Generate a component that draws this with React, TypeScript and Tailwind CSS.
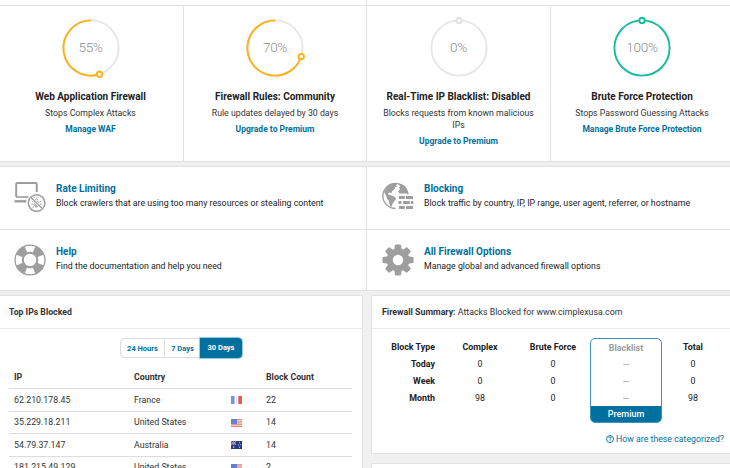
import React from "react";

type RingProps = { value: number; color: string };

function Ring({ value, color }: RingProps) {
  const r = 27.6;
  const a = (value / 100) * Math.PI * 2;
  const x = 32 - r * Math.sin(a);
  const y = 32 - r * Math.cos(a);
  const large = value > 50 ? 1 : 0;
  return (
    <div className="grid h-16 w-16 place-items-center">
      <svg className="col-start-1 row-start-1" width="64" height="64" viewBox="0 0 64 64" fill="none" strokeWidth="1.9">
        <circle cx="32" cy="32" r={r} stroke={value === 100 ? color : "#e7e7e7"} />
        {value > 0 && value < 100 && <path d={`M32 ${32 - r}A${r} ${r} 0 ${large} 0 ${x} ${y}`} stroke={color} />}
        <circle cx={x} cy={y} r="2.7" fill="#fff" stroke={color} />
      </svg>
      <span className="col-start-1 row-start-1 text-[13.5px] font-light leading-none tracking-[-0.3px] text-[#8e8e8e]">{value}%</span>
    </div>
  );
}

type Status = { value: number; color: string; title: string; text: string; link: string };

const statuses: Status[] = [
  { value: 55, color: "#fcb214", title: "Web Application Firewall", text: "Stops Complex Attacks", link: "Manage WAF" },
  { value: 70, color: "#fcb214", title: "Firewall Rules: Community", text: "Rule updates delayed by 30 days", link: "Upgrade to Premium" },
  { value: 0, color: "#e2e2e2", title: "Real-Time IP Blacklist: Disabled", text: "Blocks requests from known malicious IPs", link: "Upgrade to Premium" },
  { value: 100, color: "#16bc9b", title: "Brute Force Protection", text: "Stops Password Guessing Attacks", link: "Manage Brute Force Protection" },
];

function StatusCard({ value, color, title, text, link }: Status) {
  return (
    <div className="flex flex-col items-center border-r border-[#e2e2e2] pt-2.5 text-center first:pr-0.5">
      <Ring value={value} color={color} />
      <h3 className="mt-2.5 whitespace-nowrap text-[10px] font-bold leading-[13px] text-[#222]">{title}</h3>
      <p className="mt-1 w-[160px] text-[8.75px] leading-3 text-[#333]">{text}</p>
      <a className="mt-1 whitespace-nowrap text-[8.5px] font-bold leading-3 text-[#00709e]">{link}</a>
    </div>
  );
}

function RateIcon() {
  return (
    <svg width="32" height="32" viewBox="0 0 32 32" fill="none" stroke="#9e9e9e">
      <path d="M2.2 16V2.9q0-.9.9-.9h18.8q.9 0 .9.9V11" strokeWidth="2" />
      <path d="M2 16h12.5" strokeWidth="1.6" />
      <path d="M.5 20.3h11.8" strokeWidth="2.4" />
      <circle cx="22.6" cy="22" r="8.3" strokeWidth="1.6" />
      <ellipse cx="22.6" cy="23" rx="2.5" ry="3.6" fill="#a9a9a9" stroke="none" />
      <path d="M21 18.8q1.6-2 3.2 0M19.8 21l-2-1m2 3.2h-2.4m2.8 2.2-1.8 1.4m7-5.8 2-1.2m-2 3.4h2.6m-2.8 2.2 1.8 1.4m-4.4-9.7 1-1.3m-3.3 1.3-1-1.3" strokeWidth=".9" />
      <path d="m17 16.4 11.3 11.3" stroke="#fff" strokeWidth="3" />
      <path d="m16.8 16.2 11.6 11.6" strokeWidth="1.4" />
    </svg>
  );
}

function BlockingIcon() {
  return (
    <svg width="32" height="32" viewBox="0 0 32 32" fill="#9e9e9e">
      <path d="M13.5 27.5A12.6 12.6 0 1 1 26 13.3" fill="none" stroke="#9e9e9e" strokeWidth="1.3" />
      <path d="M5 6.2 8.3 3.5l4.2-1.3 3 .5-1.6 1.7 1.5 1.2-2.4.7-.5 2-2.2 1.6-.8 2.1-2-.6-1.8.8 1.3 1.7 2.6.7 3.4 1.5 1 1.8-2 2.8-1.7 2.5-.8 2.8-1.8-1.5-.8-4.7-1.9-2-.8-2.9L3 12.7 2 10.8Z" />
      <path d="m16.4 3.7 3-.8 3.4 2.3 2.1 3 1 4.2h-8.5l-1.3-2 2-2.5-1.3-1.4 1.7-1.2Z" />
      <path d="M17 15h5.8v3H17zm7 0h7v3h-7zm-7.5 5h3v3h-3zm4.5 0h6.8v3H21zm8 0h2.3v3H29zm-12 5h5.8v3H17zm7 0h7v3h-7z" />
    </svg>
  );
}

function HelpIcon() {
  return (
    <svg width="32" height="32" viewBox="0 0 32 32">
      <circle cx="16" cy="16" r="15.6" fill="#9e9e9e" />
      <g fill="#fff">
        <path d="M10.8 2.7Q16 .7 21.2 2.7L19 8.3q-3-1.1-6 0Z" />
        <path d="M29.3 10.8q2 5.2 0 10.4L23.7 19q1.1-3 0-6Z" />
        <path d="M21.2 29.3q-5.2 2-10.4 0L13 23.7q3 1.1 6 0Z" />
        <path d="M2.7 21.2q-2-5.2 0-10.4L8.3 13q-1.1 3 0 6Z" />
      </g>
      <circle cx="16" cy="16" r="6.8" fill="#fff" stroke="#9e9e9e" strokeWidth="1.2" />
    </svg>
  );
}

function GearIcon() {
  return (
    <svg width="32" height="32" viewBox="0 0 32 32">
      <g fill="#9e9e9e">
        {[0, 45, 90, 135, 180, 225, 270, 315].map((d) => (
          <path key={d} transform={`rotate(${d} 16 16)`} d="M12.2 6 13 1.3q.2-.8 1-.8h4q.8 0 1 .8L19.8 6Z" />
        ))}
        <circle cx="16" cy="16" r="11.4" />
      </g>
      <circle cx="16" cy="16" r="5.2" fill="#fff" />
    </svg>
  );
}

function Option({ icon, title, text, className }: { icon: React.ReactNode; title: string; text: string; className: string }) {
  return (
    <div className={`flex gap-[10px] ${className}`}>
      {icon}
      <div className="whitespace-nowrap pt-px">
        <h3 className="text-[10px] font-bold leading-[14px] text-[#00709e]">{title}</h3>
        <p className="text-[8.8px] leading-[14px] text-[#222]">{text}</p>
      </div>
    </div>
  );
}

function Flag({ country }: { country: string }) {
  if (country === "France")
    return (
      <svg width="11" height="8" viewBox="0 0 11 8">
        <path fill="#7590d8" d="M0 0h3.7v8H0z" />
        <path fill="#f1f1f4" d="M3.7 0h3.6v8H3.7z" />
        <path fill="#e8584f" d="M7.3 0H11v8H7.3z" />
      </svg>
    );
  if (country === "Australia")
    return (
      <svg width="11" height="8" viewBox="0 0 11 8">
        <path fill="#263a82" d="M0 0h11v8H0z" />
        <path d="m0 .5 5 3.5m0-3.5L0 4" stroke="#c3c5df" strokeWidth=".8" />
        <path d="M2.5 0v4.3M0 2.2h5.2" stroke="#d77c8c" />
        <path fill="#d4d9ed" d="M2 5.5h1.3v1.3H2zm6-4.2h1v1H8zm-.9 2.2h1v1h-1zm2.2-.3h1v1h-1zM8 5.7h1v1H8z" />
      </svg>
    );
  return (
    <svg width="11" height="8" viewBox="0 0 11 8">
      <path fill="#f6c8c3" d="M0 0h11v8H0z" />
      <path d="M0 .7h11M0 3h11M0 5.3h11M0 7.5h11" stroke="#e78682" />
      <path fill="#6680cf" d="M0 0h6v5H0z" />
    </svg>
  );
}

const blocked = [
  { ip: "62.210.178.45", country: "France", count: 22 },
  { ip: "35.229.18.211", country: "United States", count: 14 },
  { ip: "54.79.37.147", country: "Australia", count: 14 },
  { ip: "181.215.49.129", country: "United States", count: 2 },
];

function TopIps() {
  return (
    <section className="h-[185px] w-[363px] border border-l-0 border-[#dfe3e6] bg-white">
      <h2 className="flex h-[33px] items-center border-b border-[#ebebeb] pl-[9px] pt-px text-[8.7px] font-bold text-[#333]">Top IPs Blocked</h2>
      <div className="ml-[120px] mt-2 flex h-[22px] items-center whitespace-nowrap text-center text-[7.5px] font-bold text-[#00709e]">
        <span className="h-5 w-[45px] rounded-l-sm border border-[#dcdcdc] leading-[19px]">24 Hours</span>
        <span className="h-5 w-[35px] border-y border-[#dcdcdc] leading-[19px]">7 Days</span>
        <span className="h-5 w-[42px] rounded-r-sm bg-[#00709e] leading-5 text-white shadow-[0_0_1px_1px_#8fc3da]">30 Days</span>
      </div>
      <div className="ml-[9px] mt-[5px] w-[343px] text-[8.8px] text-[#333]">
        <div className="grid h-[25px] grid-cols-[119px_98px_35px_80px] items-center border-b border-[#dcdcdc] pl-[5px] pt-[3px] font-bold">
          <span>IP</span>
          <span className="col-span-2 pl-px">Country</span>
          <span>Block Count</span>
        </div>
        {blocked.map((b) => (
          <div key={b.ip} className="grid h-[22.5px] grid-cols-[119px_98px_35px_80px] items-center border-b border-[#dcdcdc] pl-[5px] pt-px">
            <span>{b.ip}</span>
            <span className="pl-px">{b.country}</span>
            <Flag country={b.country} />
            <span>{b.count}</span>
          </div>
        ))}
      </div>
    </section>
  );
}

function Column({ head, values, className }: { head: string; values: string[]; className: string }) {
  return (
    <div className={`whitespace-nowrap text-[8.9px] leading-[17px] ${className}`}>
      <div className="font-bold">{head}</div>
      {values.map((v, i) => (
        <div key={i}>{v}</div>
      ))}
    </div>
  );
}

function Summary() {
  return (
    <section className="h-[159px] w-[370px] border border-[#dfe3e6] bg-white">
      <h2 className="flex h-[33px] items-center whitespace-pre border-b border-[#ebebeb] pl-[10px] pt-px text-[8.8px] text-[#333]">
        <b>Firewall Summary:</b> Attacks Blocked for www.cimplexusa.com
      </h2>
      <div className="flex pt-[9px] text-[#222]">
        <Column className="w-[63px] pt-px text-right font-bold" head="Block Type" values={["Today", "Week", "Month"]} />
        <Column className="ml-[16px] w-[58px] pt-px text-center" head="Complex" values={["0", "0", "98"]} />
        <Column className="ml-[11px] w-[66px] pt-px text-center" head="Brute Force" values={["0", "0", "0"]} />
        <div className="ml-[4px] h-[85px] w-[72px] overflow-hidden rounded-[5px] border border-[#3f94b6]">
          <Column className="h-[67px] pt-px text-center text-[#9b9b9b]" head="Blacklist" values={["—", "—", "—"]} />
          <div className="h-[18px] bg-[#00709e] text-center text-[9px] font-medium leading-[16px] text-white">Premium</div>
        </div>
        <Column className="w-[62px] pt-px text-center" head="Total" values={["0", "0", "98"]} />
      </div>
      <div className="mt-[9px] flex items-center justify-end gap-[2px] pr-4 text-[8.75px] leading-[14px] text-[#00709e]">
        <svg width="8" height="8" viewBox="0 0 8 8" fill="none" stroke="#00709e">
          <circle cx="4" cy="4" r="3.5" strokeWidth=".9" />
          <path d="M2.8 3.1q0-1.2 1.2-1.2t1.2 1q0 .7-1.1 1.3v.6m0 .6v.8" strokeWidth=".9" />
        </svg>
        <span className="whitespace-nowrap">How are these categorized?</span>
      </div>
    </section>
  );
}

export default function App() {
  return (
    <div className="h-[468px] w-[730px] overflow-hidden bg-[#f0f0f0] font-['Roboto',sans-serif]">
      <div className="flex h-[6px] border-b border-[#e2e2e2] bg-white">
        <div className="w-[367px] border-r border-[#e2e2e2]" />
      </div>
      <div className="grid h-[156px] w-[734px] grid-cols-[184px_183px_184px_183px] border-b border-[#e2e2e2] bg-white">
        {statuses.map((s) => (
          <StatusCard key={s.title} {...s} />
        ))}
      </div>
      <div className="mt-1 grid h-[125px] w-[734px] grid-cols-[367px_367px] grid-rows-[63px_60px] border-y border-[#e2e2e2] bg-white">
        <Option className="border-b border-r border-[#e2e2e2] pl-[14px] pt-[14px]" icon={<RateIcon />} title="Rate Limiting" text="Block crawlers that are using too many resources or stealing content" />
        <Option className="border-b border-[#e2e2e2] pl-[15px] pt-[14px]" icon={<BlockingIcon />} title="Blocking" text="Block traffic by country, IP, IP range, user agent, referrer, or hostname" />
        <Option className="border-r border-[#e2e2e2] pl-[14px] pt-[14px]" icon={<HelpIcon />} title="Help" text="Find the documentation and help you need" />
        <Option className="pl-[15px] pt-[14px]" icon={<GearIcon />} title="All Firewall Options" text="Manage global and advanced firewall options" />
      </div>
      <div className="mt-1 flex w-[741px] gap-2">
        <TopIps />
        <div className="flex flex-col gap-[9px]">
          <Summary />
          <div className="h-5 w-[370px] border border-[#dfe3e6] bg-white" />
        </div>
      </div>
    </div>
  );
}
